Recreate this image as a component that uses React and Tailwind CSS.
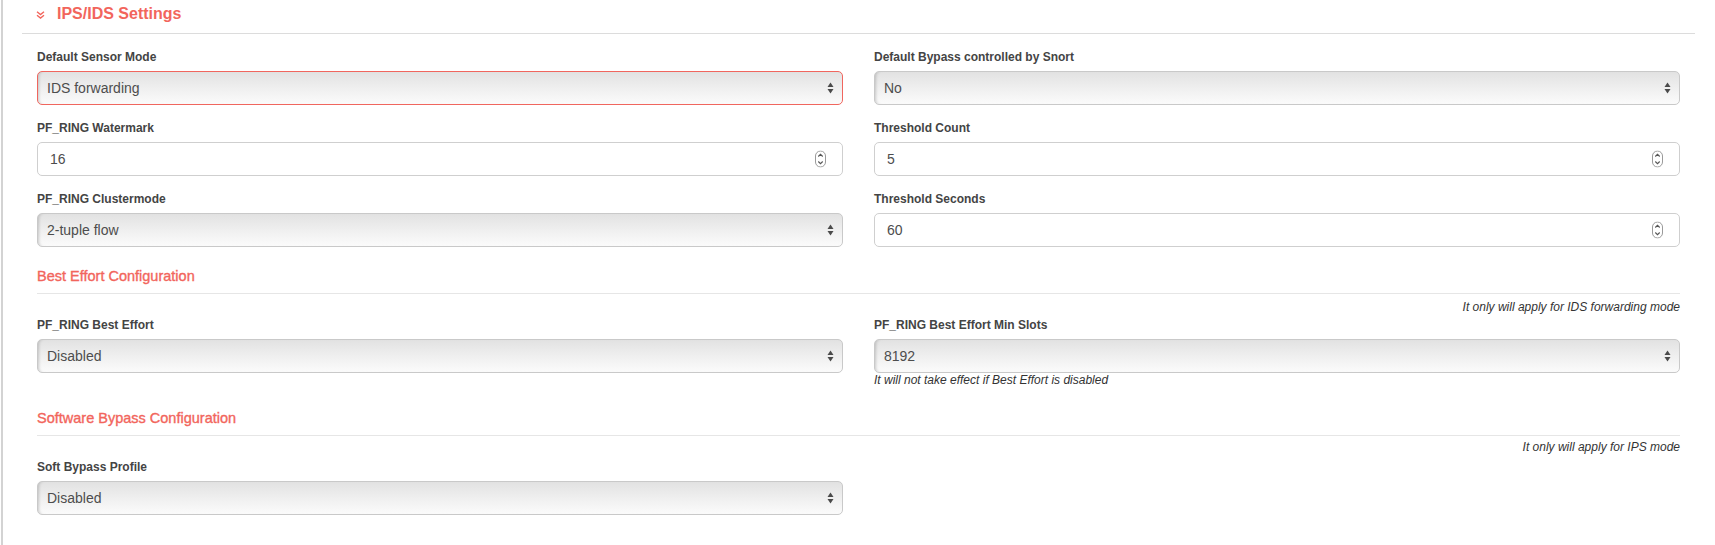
import React from "react"

const coral = "text-[#f2655c]"

function SelectArrows() {
  return (
    <svg width="7" height="12" viewBox="0 0 7 12" className="absolute right-[8px] top-1/2 -translate-y-1/2">
      <path d="M3.5 0.5 L6.5 5 L0.5 5 Z" fill="#4a4a4a" />
      <path d="M0.5 7 L6.5 7 L3.5 11.5 Z" fill="#4a4a4a" />
    </svg>
  )
}

function Spinner() {
  return (
    <svg width="11" height="17" viewBox="0 0 11 17" className="absolute right-[16px] top-1/2 -translate-y-1/2">
      <rect x="0.5" y="0.5" width="10" height="16" rx="5" fill="white" stroke="#9a9a9a" />
      <path d="M3.3 6 L5.5 3.8 L7.7 6" fill="none" stroke="#555" strokeWidth="1.1" />
      <path d="M3.3 11 L5.5 13.2 L7.7 11" fill="none" stroke="#555" strokeWidth="1.1" />
    </svg>
  )
}

function Select({ value, error }) {
  return (
    <div
      className={
        "relative h-[34px] rounded-[5px] border bg-linear-to-b from-[#e2e2e2] via-[#efefef] to-[#fbfbfb] shadow-[inset_3px_0_3px_-2px_rgba(0,0,0,0.18)] " +
        (error ? "border-[#f0665e]" : "border-[#c9c9c9]")
      }
    >
      <span className="block pl-[9px] text-[14px] leading-[32px] text-[#4d4d4d]">{value}</span>
      <SelectArrows />
    </div>
  )
}

function NumberInput({ value }) {
  return (
    <div className="relative h-[34px] rounded-[5px] border border-[#cfcfcf] bg-white">
      <span className="block pl-[12px] text-[14px] leading-[32px] text-[#4d4d4d]">{value}</span>
      <Spinner />
    </div>
  )
}

function Field({ label, children, hint, last }) {
  return (
    <div className={last ? "" : "mb-[15px]"}>
      <div className="mb-[6px] text-[12px] font-bold leading-4 text-[#444]">{label}</div>
      {children}
      {hint && <div className="text-[12px] italic leading-[14px] text-[#333]">{hint}</div>}
    </div>
  )
}

function SubHeader({ title, className }) {
  return (
    <div className={"border-b border-[#e6e6e6] pb-[8px] " + className}>
      <div className={"text-[14.5px] leading-[18px] [-webkit-text-stroke:0.35px_#f2655c] " + coral}>{title}</div>
    </div>
  )
}

function Note({ text, className }) {
  return <div className={"text-right text-[12px] italic leading-[14px] text-[#333] " + className}>{text}</div>
}

export default function App() {
  return (
    <div className="h-[545px] w-[1715px] bg-white pl-px font-['Liberation_Sans',Arial,sans-serif]">
      <div className="h-full border-l-2 border-[#d3d3d3]">
        <div className="ml-[19px] mr-[20px] flex h-[34px] items-start border-b border-[#dcdcdc] pt-[4px]">
          <svg width="9" height="8" viewBox="0 0 9 8" className="ml-[14px] mt-[7px]">
            <path d="M1 0.8 L4.5 3.6 L8 0.8" fill="none" stroke="#f2655c" strokeWidth="1.4" />
            <path d="M1 4.2 L4.5 7 L8 4.2" fill="none" stroke="#f2655c" strokeWidth="1.4" />
          </svg>
          <h2 className={"ml-[12px] text-[16px] font-bold leading-5 " + coral}>IPS/IDS Settings</h2>
        </div>

        <div className="ml-[34px] mr-[35px] pt-[15px]">
          <div className="grid grid-cols-2 gap-x-[31px]">
            <div>
              <Field label="Default Sensor Mode">
                <Select value="IDS forwarding" error />
              </Field>
              <Field label="PF_RING Watermark">
                <NumberInput value="16" />
              </Field>
              <Field label="PF_RING Clustermode">
                <Select value="2-tuple flow" />
              </Field>
            </div>
            <div>
              <Field label="Default Bypass controlled by Snort">
                <Select value="No" />
              </Field>
              <Field label="Threshold Count">
                <NumberInput value="5" />
              </Field>
              <Field label="Threshold Seconds">
                <NumberInput value="60" />
              </Field>
            </div>
          </div>

          <SubHeader title="Best Effort Configuration" className="mt-[5px]" />
          <Note text="It only will apply for IDS forwarding mode" className="mt-[6px]" />
          <div className="mt-[3px] grid grid-cols-2 gap-x-[31px]">
            <Field label="PF_RING Best Effort" last>
              <Select value="Disabled" />
            </Field>
            <Field label="PF_RING Best Effort Min Slots" hint="It will not take effect if Best Effort is disabled" last>
              <Select value="8192" />
            </Field>
          </div>

          <SubHeader title="Software Bypass Configuration" className="mt-[22px]" />
          <Note text="It only will apply for IPS mode" className="mt-[4px]" />
          <div className="mt-[5px] grid grid-cols-2 gap-x-[31px]">
            <Field label="Soft Bypass Profile" last>
              <Select value="Disabled" />
            </Field>
            <div />
          </div>
        </div>
      </div>
    </div>
  )
}
